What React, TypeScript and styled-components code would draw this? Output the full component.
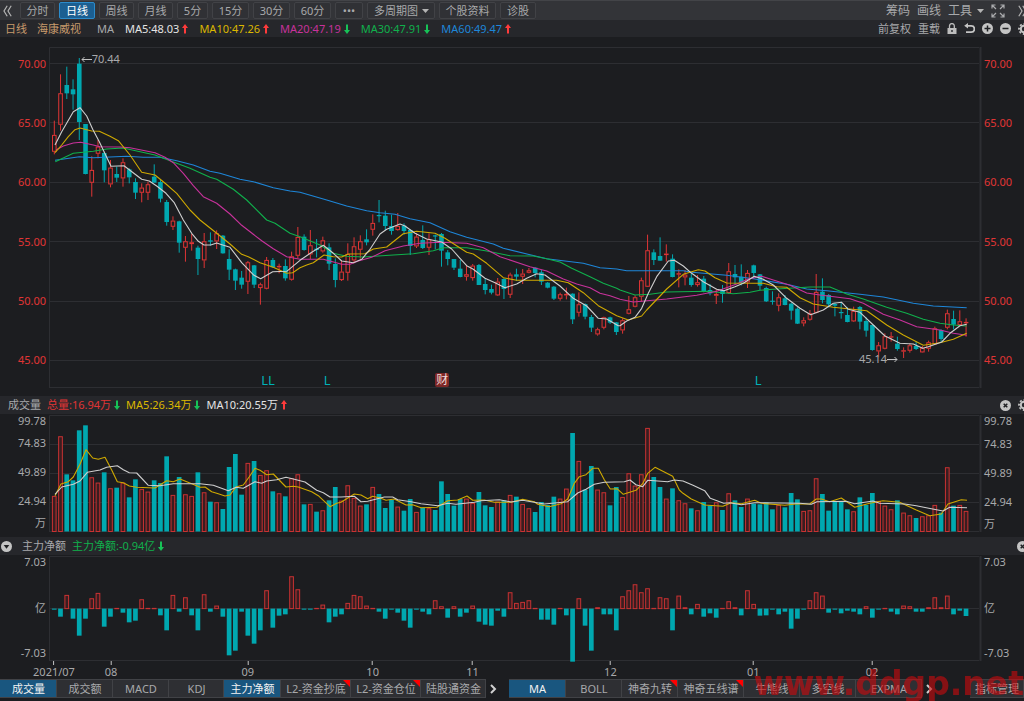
import React from "react";
import styled, { createGlobalStyle, css } from "styled-components";

const c = {
  page: "#1c1d20",
  header: "#26272b",
  toolbar: "#333438",
  line: "#2d2e32",
  border: "#414246",
  text: "#a8a9ab",
  bright: "#e4e4e4",
  red: "#e03535",
  up: "#c83232",
  teal: "#00a8b0",
  yellow: "#cfa900",
  gold: "#dcb800",
  magenta: "#c8329b",
  green: "#10b04c",
  blue: "#1e86d8",
  white: "#cfcfcf",
  active: "#19567f",
};

const GlobalStyle = createGlobalStyle`
  * { box-sizing: border-box; }
  body {
    margin: 0;
    background: ${c.page};
    color: ${c.text};
    font: 11px/16px "Noto Sans", "Noto Sans CJK SC", sans-serif;
    overflow: hidden;
  }
  button, select { font: inherit; color: inherit; margin: 0; }
`;

/* ---------- market data ---------- */

const FIRST_X = 54;
const STEP = 6.245;
const barX = (i: number) => FIRST_X + STEP * i;

type Candle = { up: boolean; high: number; low: number; top: number; bottom: number };

/* Each section lists kind + high,low,top,bottom in thirds of a unit below its base. */
const readCandles = (base: number, rows: string): Candle[] =>
  rows.trim().split(/\s+/).map((row) => {
    const [high, low, top, bottom] = row.slice(1).split(",").map((v) => base + Number(v) / 3);
    return { up: row[0] === "r", high, low, top, bottom };
  });

const candles: Candle[] = [
  ...readCandles(40, `
    r242,343,285,335 r103,272,160,254 c80,177,135,160 c118,209,148,163 c54,300,71,246
    c252,403,252,402 r349,470,390,428 r300,355,320,341 c335,427,339,391 r360,442,383,433
    c380,426,402,413 r355,440,367,415 c385,430,388,412 c415,477,426,458 r430,487,443,458
    r425,480,433,458 c373,427,410,428 c417,487,426,476 c480,557,486,546 r529,570,542,560
    c542,638,544,608 r588,665,604,623 r582,632,607,612 c617,705,623,657 r579,684,604,661
    c577,617,601,605 r571,627,580,604 c585,641,587,640 c628,720,657,689 c686,750,688,722
    c693,746,713,734 r663,762,667,725 c675,744,676,734 r728,794,733,744 r651,748,660,746
    c654,684,660,682 r671,700,678,681 c658,722,678,715 r635,722,649,719 r561,655,591,647
    c583,632,590,630 r570,657,616,643 c597,652,626,630 r590,638,601,634 c610,690,622,671`),
  ...readCandles(180, `
    c235,322,252,300 r243,303,275,300 r190,302,222,278 r172,250,199,241 r166,236,184,209
    c148,196,178,187 r103,167,129,149 c60,127,105,108 c92,150,107,138 c104,164,138,153
    r99,152,138,150 c130,164,137,153 c148,225,150,198 r160,204,170,199 c136,207,180,204
    r160,225,178,203 c164,208,166,169 c159,260,162,212 c210,256,217,237 c237,270,237,263
    c240,292,266,291 r255,302,283,290 r252,302,257,294 c252,315,255,315 c295,343,312,330
    c314,343,327,338 r294,348,305,346 c295,357,297,327 r278,354,284,344 c266,303,283,290
    r267,312,281,290 r264,280,271,278 c262,292,263,279 c270,315,277,305 c306,325,308,323
    c318,360,320,356 r338,362,343,356 r323,358,342,346 c340,432,341,418 r337,410,373,398
    c370,418,372,410 c405,456,411,443 r443,467,448,463 r410,448,412,443 c410,432,412,428
    c426,465,427,456`),
  ...readCandles(220, `
    r295,341,301,331 r228,283,268,281 r226,262,232,260 r173,245,181,230 r44,201,91,200
    c88,135,97,120 c52,122,108,122 r73,125,101,105 c103,172,116,171 r148,202,160,163
    r150,196,164,172 c160,200,173,195 r165,200,187,195 c168,217,176,213 c192,226,210,220
    r208,252,222,227 c195,248,210,222 r129,222,154,219 c135,194,162,172 c133,196,170,188
    r150,204,159,187 c134,175,136,159 c162,210,163,197 c200,246,204,244 c214,254,242,245
    r220,274,232,257 c225,256,235,255 c248,299,251,272 c262,312,266,311 r292,319,301,310
    r270,302,280,299 r162,280,216,278 c175,250,215,240 c222,262,225,253 c248,289,252,257
    c245,296,276,279 c262,307,285,306 r260,306,273,304 c258,328,261,305 c292,350,303,332
    c314,392,315,390 r366,412,376,394 r340,388,349,386 r336,365,349,352 c350,392,371,387
    r382,414,391,394 r370,398,376,392 c365,390,378,387 r378,398,384,397 r362,395,367,386
    r320,374,325,373 c328,365,330,357 r269,328,280,323 c272,328,297,314 r271,318,304,315
    r295,350,306,309`),
];

type Bar = { up: boolean; y: number };
const readBars = (base: number, rows: string): Bar[] =>
  rows.trim().split(/\s+/).map((row) => ({ up: row[0] === "r", y: base + Number(row.slice(1)) / 3 }));

const volumes = readBars(395, `
  r303 r124 c238 c256 c106 c91 r247 r263 c232 r280 c278 r263 c307 c253 r282 r290 c256 c264 c184 r300
  c246 r298 r303 c232 r292 c320 r322 c342 c216 c177 c299 r204 c198 r240 r226 c289 r295 c304 r250 r238
  c328 r327 c350 r346 c316 c276 r317 r271 r309 r332 c328 r276 c297 c339 c315 r335 c347 c312 r351 c338
  r340 c345 c259 c297 c332 c312 r311 r324 c291 c331 c336 r320 c316 r300 c305 r327 r340 c351 c321 c330
  c305 r311 r281 c114 r198 c284 c213 r284 r292 c331 c276 r306 r235 r272 r238 r99 c246 c276 r311 c280
  r316 r325 c340 r346 c321 c332 r322 c345 r295 c316 c336 r311 c326 c328 c322 c343 r330 c337 c294 c313
  r348 r346 r250 c297 c347 c321 c320 c343 r349 c307 c330 c294 r318 r332 r343 c316 r353 r361 c369 r364
  r361 r330 c353 r217 c332 r330 r348`);

const flows = readBars(535, `
  c224 c245 r180 c251 c302 c251 r190 r174 c275 c245 r219 c233 c262 c257 r193 r219 r219 c241 c286 r180
  c230 r187 c241 c286 r178 c230 r212 c245 c361 c347 c230 c302 c326 c286 r166 c278 c242 c238 r124 r163
  c224 c224 r219 r209 c262 c245 c238 r204 r180 r184 r212 r219 c230 c251 c224 c233 c257 c278 c224 c230
  c238 r196 r214 c248 r214 c245 c233 r212 c260 c269 c272 c227 c245 r172 r204 r201 r196 r219 c254 c254
  c269 r219 c241 c380 r190 c272 c347 r217 c238 c238 c286 r184 r166 r148 r172 r160 r219 r187 r190 c286
  r182 r217 c238 r207 c245 c235 c248 r219 r199 r217 c241 r166 r207 c242 c241 c224 c238 c230 c281 c251
  c224 r196 r172 r182 c233 c224 c235 c227 c230 c238 r214 c248 c224 r219 c230 c238 r212 r214 c230 c230
  r217 r187 r217 r182 c238 c227 c243`);

type Section = [number, number, string];
const curve = (...sections: Section[]) =>
  sections
    .map(([ox, oy, pts]) =>
      pts.split(" ").map((p) => {
        const [x, y] = p.split(",").map(Number);
        return `${(ox + x / 3).toFixed(1)},${(oy + y / 3).toFixed(1)}`;
      }).join(" "))
    .join(" ");

const priceAverages = [
  { color: c.blue, points: curve(
    [40, 40, "45,361 118,350 160,353 260,349 310,352 360,352 410,362 460,375 510,394 540,400 600,418 640,425 700,443 750,453"],
    [300, 180, "0,37 80,60 140,78 200,92 240,98 285,103 330,116 390,128 450,155 500,172 580,192 610,205 690,224 740,236 850,250 900,263 950,267"],
    [620, 220, "20,152 190,152 215,157 320,166 400,176 500,193 560,207 620,212 720,223 790,231 880,250 940,258 1040,263"]) },
  { color: c.green, points: curve(
    [40, 40, "46,365 100,340 160,334 200,327 250,324 290,333 345,345 400,366 450,385 510,412 530,418 580,448 620,480 680,540 705,550 750,580"],
    [300, 180, "0,170 60,195 100,220 140,229 190,231 280,225 340,221 400,212 430,203 500,203 560,213 630,227 700,228 740,236 780,246 815,265 870,290 910,310 950,325"],
    [620, 220, "0,210 45,225 90,223 140,216 260,214 340,221 390,217 420,211 470,207 570,201 630,201 680,222 730,237 800,262 860,280 910,298 960,310 1000,315 1040,318"]) },
  { color: c.magenta, points: curve(
    [40, 40, "48,330 70,318 100,309 122,307 160,315 180,320 240,321 270,323 300,329 345,338 375,352 400,368 430,400 460,437 490,470 530,490 570,522 605,556 640,583 665,602 700,626 740,650"],
    [300, 180, "0,238 70,238 125,253 150,253 175,243 215,232 255,212 310,198 360,190 420,187 500,190 550,203 600,230 690,260 740,273 790,297 830,312 870,323 900,340 930,347"],
    [620, 220, "0,238 40,246 140,237 230,226 290,214 350,192 385,177 425,169 460,180 510,196 560,219 600,225 690,236 730,250 790,283 840,300 890,320 960,330 1000,340 1040,346"]) },
  { color: c.yellow, points: curve(
    [40, 40, "45,338 65,315 85,290 105,269 120,264 155,273 178,274 210,289 235,302 270,345 305,397 345,405 378,432 410,460 450,510 480,540 530,580 570,612 605,643 625,650 660,668 700,682 740,700 758,698"],
    [300, 180, "0,263 20,255 40,248 72,225 100,230 125,231 145,222 195,221 220,207 260,201 310,161 350,154 405,160 435,175 500,217 520,222 560,250 610,293 650,301 715,301 770,301 805,308 850,338 895,377 950,407"],
    [620, 220, "25,300 65,288 80,270 140,207 190,163 235,149 255,153 285,173 320,189 400,190 430,190 470,200 500,202 540,233 580,252 640,262 740,272 800,315 850,345 910,376 960,368 1000,358 1040,340"]) },
  { color: c.white, points: curve(
    [40, 40, "45,315 65,275 100,215 120,203 140,228 158,268 178,305 213,379 252,377 305,418 328,423 350,438 378,460 402,487 430,540 455,580 475,604 492,615 512,615 530,609 548,615 570,622 605,668 642,706 662,716 698,695 740,694"],
    [300, 180, "0,241 35,217 70,196 100,220 125,243 160,248 185,238 210,208 240,162 260,148 300,132 315,138 345,160 380,177 425,186 455,207 480,235 500,257 520,268 555,295 585,308 615,323 650,312 680,295 710,281 735,285 780,318 820,355 860,378 895,415 920,417 955,437"],
    [620, 220, "0,317 20,303 45,292 65,265 85,220 110,170 145,123 163,121 190,138 215,160 250,185 290,208 312,212 345,200 370,190 403,169 430,178 460,195 500,235 540,265 572,284 610,270 640,250 665,247 685,268 720,277 760,315 795,348 840,370 880,372 908,385 925,380 965,366 990,340 1020,317 1040,313"]) },
];

const volumeAverages = [
  { color: c.yellow, points: curve(
    [0, 395, "165,302 183,267 205,260 220,246 240,208 258,164 278,189 295,193 315,187 335,225 352,260 370,263 388,273 410,277 465,279 500,257 520,260 540,252 575,266 600,277 615,276 635,290 655,296 675,303 690,300 708,276 730,270 748,245 765,220 780,226 800,239 820,237 858,276 880,274 895,276 935,290 955,302 990,335 1010,325"],
    [341, 395, "0,322 40,297 60,300 80,311 95,304 120,310 135,316 160,312 195,330 215,329 240,338 288,337 320,317 350,315 378,303 395,316 430,315 460,322 510,322 545,313 580,320 590,328 625,335 660,326 680,312 700,265 715,245 735,239 755,220 772,220 790,254 808,282 828,281 847,298 885,286 905,266 920,235 942,217 995,244 1015,285"],
    [683, 395, "0,295 25,312 65,330 120,334 145,323 175,326 215,316 235,325 305,331 345,326 380,327 400,312 415,312 440,320 475,309 515,337 560,325 600,317 650,322 700,345 740,362 775,357 795,327 835,314 852,316"]) },
  { color: c.white, points: curve(
    [0, 395, "165,298 185,276 220,268 240,258 262,232 300,225 320,217 352,212 370,224 388,233 410,234 445,271 480,272 520,266 600,266 640,271 685,287 708,277 730,280 765,260 785,265 800,258 830,254 858,247 880,252 915,261 950,286 970,293 990,306"],
    [341, 395, "0,306 40,304 60,320 80,319 130,306 155,306 170,314 210,320 240,326 290,332 320,325 345,328 400,322 420,317 475,314 510,321 545,316 610,327 680,320 710,294 735,283 760,268 790,262 850,260 867,255 885,269 905,275 920,256 980,260 1000,255"],
    [683, 395, "0,258 30,271 65,287 82,310 122,325 140,323 175,329 215,323 350,325 385,328 402,320 490,319 515,326 570,318 590,325 665,327 700,332 745,341 780,348 800,337 852,338"]) },
];

/* ---------- layout ---------- */

const Screen = styled.main`
  display: flex;
  flex-direction: column;
  min-height: 100vh;
  overflow: hidden;
`;

const Bar = styled.div`
  display: flex;
  align-items: center;
  justify-content: space-between;
  overflow: hidden;
  white-space: nowrap;
`;

const Toolbar = styled(Bar)`
  height: 20px;
  padding-left: 3px;
  background: ${c.toolbar};
  border-top: 1px solid #434448;
`;

const InfoBar = styled(Bar)`
  height: 17px;
  padding-left: 5px;
  background: ${c.header};
`;

const PanelHeader = styled(Bar)<{ $indent: number }>`
  height: 18px;
  padding-left: ${(p) => p.$indent}px;
  background: ${c.header};
`;

const Group = styled.div<{ $gap: number; $bleed?: number }>`
  display: flex;
  align-items: center;
  gap: ${(p) => p.$gap}px;
  margin-right: -${(p) => p.$bleed ?? 0}px;
`;

const toolFace = css`
  height: 17px;
  padding: 0;
  border: 1px solid ${c.border};
  border-radius: 2px;
  background: #303135;
  line-height: 15px;
`;

const ToolButton = styled.button<{ $width: number; $active?: boolean }>`
  ${toolFace}
  width: ${(p) => p.$width}px;
  ${(p) => p.$active && css`
    background: #1b5f92;
    border-color: #2b8bcb;
    color: #ffffff;
  `}
`;

const SelectWrap = styled.label`
  display: flex;
  position: relative;
`;

const ToolSelect = styled.select`
  ${toolFace}
  width: 68px;
  padding-left: 6px;
  appearance: none;
`;

const SelectArrow = styled.span`
  position: absolute;
  top: 7px;
  right: 6px;
  display: flex;
  pointer-events: none;
`;

const PlainButton = styled.button<{ $size?: number }>`
  display: flex;
  align-items: center;
  gap: 5px;
  padding: 0;
  border: 0;
  background: none;
  font-size: ${(p) => p.$size ?? 11}px;
  line-height: 16px;
`;

const Reading = styled.span<{ $color: string }>`
  display: inline-flex;
  align-items: center;
  gap: 3px;
  color: ${(p) => p.$color};
`;

const Instrument = styled.span`
  display: flex;
  gap: 10px;
  margin-right: 5px;
  color: #c79a6b;
`;

const Plot = styled.section<{ $height: number; $top: number; $bottom: number }>`
  display: grid;
  grid-template-columns: 49px minmax(0, 1fr) 44px;
  grid-template-rows: minmax(0, 1fr);
  flex: ${(p) => p.$height} 0 ${(p) => p.$height}px;
  margin: ${(p) => p.$top}px 0 ${(p) => p.$bottom}px;
`;

const Canvas = styled.div`
  position: relative;
  min-height: 0;

  svg.chart {
    position: absolute;
    inset: 0;
    display: block;
    width: 100%;
    height: 100%;
    overflow: visible;
  }
`;

const Axis = styled.div<{ $side: "left" | "right"; $rows: string }>`
  display: grid;
  grid-template-rows: ${(p) => p.$rows};
  align-items: center;
  line-height: 12px;
  text-align: ${(p) => (p.$side === "left" ? "right" : "left")};
  padding: ${(p) => (p.$side === "left" ? "0 3px 0 0" : "0 0 0 4px")};

  span { min-height: 0; }
`;

const PriceAxis = styled.div<{ $side: "left" | "right" }>`
  display: flex;
  flex-direction: column;
  justify-content: space-between;
  color: ${c.red};
  text-align: ${(p) => (p.$side === "left" ? "right" : "left")};
  padding: ${(p) => (p.$side === "left" ? "9px 3px 20px 0" : "9px 0 20px 4px")};
`;

const Note = styled.span<{ $x: number; $y: number }>`
  position: absolute;
  left: ${(p) => p.$x}%;
  top: ${(p) => p.$y}%;
  display: flex;
  align-items: center;
  line-height: 14px;
`;

const Marker = styled(Note)`
  color: #00b0b8;
  font-size: 13px;
`;

const Badge = styled(Note)`
  padding: 0 1px;
  border-radius: 2px;
  background: #7d2727;
  color: #f0d8d8;
  font-size: 12px;
`;

const Months = styled.div`
  display: grid;
  grid-template-columns: 4fr 57fr 137fr 125fr 100fr 138fr 143fr 119fr 108fr;
  height: 18px;
  margin: 0 44px 0 50px;
`;

const Month = styled.span<{ $col: number }>`
  grid-column: ${(p) => p.$col};
  display: flex;
  flex-direction: column;
  align-items: center;
  justify-self: start;
  transform: translateX(-50%);
  line-height: 14px;

  &::before {
    content: "";
    width: 1px;
    height: 4px;
    background: #c4c4c4;
  }
`;

const TabBar = styled.nav`
  display: flex;
  align-items: stretch;
  height: 19px;
  margin-bottom: 3px;
  overflow: hidden;
  position: relative;
`;

const Tab = styled.button<{ $width: number; $active?: boolean }>`
  position: relative;
  flex: none;
  width: ${(p) => p.$width}px;
  padding: 1px 0 0 1px;
  border: 1px solid ${c.border};
  border-left-width: 0;
  background: ${(p) => (p.$active ? c.active : "#2e2f33")};
  color: ${(p) => (p.$active ? "#f2f2f2" : "inherit")};
  line-height: 16px;
  white-space: nowrap;
`;

const HotCorner = styled.i`
  position: absolute;
  top: 0;
  right: 0;
  border-top: 7px solid #ff0000;
  border-left: 7px solid transparent;
`;

const MoreButton = styled.button<{ $width: number }>`
  flex: none;
  display: flex;
  align-items: center;
  width: ${(p) => p.$width}px;
  padding: 0 0 0 4px;
  border: 0;
  background: none;
`;

const Spacer = styled.div`
  flex: 1;
`;

const Watermark = styled.div`
  position: fixed;
  right: 0;
  bottom: 0;
  color: rgba(205, 10, 14, 0.6);
  font: bold 33px/40px "DejaVu Sans", sans-serif;
  margin-bottom: -3px;
  pointer-events: none;
`;

/* ---------- drawings ---------- */

const Trend = ({ up }: { up: boolean }) => (
  <svg width="6" height="10" viewBox="0 0 6 10" fill={up ? "#ff3b3b" : "#17c257"} aria-hidden="true">
    {up ? <path d="M3 0 6 4H4V9.500H2V4H0Z" /> : <path d="M3 10 6 6H4V.5H2V6H0Z" />}
  </svg>
);

const Caret = () => (
  <svg width="7" height="4" viewBox="0 0 7 4" aria-hidden="true"><path d="M0 0h7L3.500 4Z" fill="#b4b4b4" /></svg>
);

const DoubleChevron = ({ flip }: { flip?: boolean }) => (
  <svg width="9" height="12" viewBox="0 0 9 12" fill="none" stroke="#b4b4b4" strokeWidth="1.200" aria-hidden="true">
    {flip ? <path d="M.8.8 4 6 .8 11.200M4.800.8 8 6 4.800 11.200" /> : <path d="M4.200.8 1 6l3.200 5.200M8.200.8 5 6l3.200 5.200" />}
  </svg>
);

const Chevron = () => (
  <svg width="7" height="10" viewBox="0 0 7 10" fill="none" stroke="#d0d0d0" strokeWidth="2" aria-hidden="true">
    <path d="M1 1l4 4-4 4" />
  </svg>
);

const ExpandIcon = () => (
  <svg width="14" height="14" viewBox="0 0 14 14" fill="none" stroke="#aaabad" strokeWidth="1.200" aria-hidden="true">
    <path d="M1 4.500V1h3.500M1 1l4 4M9.500 1H13v3.500M13 1 9 5M1 9.500V13h3.500M1 13l4-4M13 9.500V13H9.500M13 13 9 9" />
  </svg>
);

const LockIcon = () => (
  <svg width="10" height="11" viewBox="0 0 10 11" aria-hidden="true">
    <path d="M2.500 5V3a2.400 2.400 0 0 1 4.800 0v2" fill="none" stroke="#bdbdbd" strokeWidth="1.300" />
    <path fillRule="evenodd" d="M.5 5h9v6h-9ZM4.300 7v2h1.400V7Z" fill="#bdbdbd" />
  </svg>
);

const UndoIcon = () => (
  <svg width="11" height="11" viewBox="0 0 11 11" aria-hidden="true">
    <path d="M3 2.800h4.200a3.100 3.100 0 0 1 0 6.400H2" fill="none" stroke="#c4c4c4" strokeWidth="1.700" />
    <path d="M.2 2.800 4 0v5.600Z" fill="#c4c4c4" />
  </svg>
);

const discMarks = {
  plus: "M5.500 2.500v6M2.500 5.500h6",
  minus: "M2.500 5.500h6",
  close: "M3.700 3.700l3.600 3.600M7.300 3.700 3.700 7.300",
};

const Disc = ({ mark }: { mark: keyof typeof discMarks }) => (
  <svg width="11" height="11" viewBox="0 0 11 11" aria-hidden="true">
    <circle cx="5.500" cy="5.500" r="5.500" fill="#c4c4c4" />
    <path d={discMarks[mark]} stroke="#1f2023" strokeWidth="1.500" />
  </svg>
);

const CollapseIcon = () => (
  <svg width="11" height="11" viewBox="0 0 11 11" aria-hidden="true">
    <circle cx="5.500" cy="5.500" r="5.500" fill="#c4c4c4" />
    <path d="M2.700 4h5.600L5.500 7.800Z" fill="#1f2023" />
  </svg>
);

const GearIcon = () => (
  <svg width="12" height="12" viewBox="0 0 12 12" fill="none" stroke="#c4c4c4" aria-hidden="true">
    <circle cx="6" cy="6" r="3.200" strokeWidth="2" />
    <circle cx="6" cy="6" r="5" strokeWidth="1.800" strokeDasharray="2 1.927" strokeDashoffset="1" />
  </svg>
);

const LongArrow = ({ right }: { right?: boolean }) => (
  <svg width="11" height="7" viewBox="0 0 11 7" fill="none" stroke="#c0c0c0" aria-hidden="true">
    {right ? <path d="M0 3.500h10M7.500 1 10 3.500 7.500 6" /> : <path d="M11 3.500H1M3.500 1 1 3.500 3.500 6" />}
  </svg>
);

const Chart = ({ top, height, grid, children }: {
  top: number; height: number; grid: number[]; children: React.ReactNode;
}) => (
  <svg className="chart" viewBox={`49 ${top} 931 ${height}`} preserveAspectRatio="none" aria-hidden="true">
    <g stroke={c.line} fill="none">
      <path d={`M49.500 ${top + height}V${top + 0.5}H979`} />
      <path d={`M49 ${top + height - 0.5}H979`} />
      <path d={`M980.500 ${top}V${top + height}`} strokeWidth="2" />
      {grid.map((y) => <path key={y} d={`M49 ${y}H979`} />)}
    </g>
    {children}
  </svg>
);

const Averages = ({ lines }: { lines: { color: string; points: string }[] }) => (
  <g fill="none" strokeWidth="1.100" strokeLinejoin="round">
    {lines.map((l) => <polyline key={l.color} points={l.points} stroke={l.color} />)}
  </g>
);

const Candles = () => (
  <g>
    {candles.map((k, i) => {
      const x = barX(i) + 0.3;
      const h = Math.max(k.bottom - k.top, 1.2);
      return k.up ? (
        <g key={i} stroke={c.red} fill="none">
          <path d={`M${x} ${k.high}V${k.top}M${x} ${k.top + h}V${k.low}`} />
          <rect x={x - 1.8} y={k.top + 0.4} width="3.600" height={Math.max(h - 0.8, 0.4)} />
        </g>
      ) : (
        <g key={i} fill={c.teal}>
          <rect x={x - 0.5} y={k.high} width="1" height={k.low - k.high} />
          <rect x={x - 2.3} y={k.top} width="4.600" height={h} />
        </g>
      );
    })}
  </g>
);

const Columns = ({ bars, base }: { bars: Bar[]; base: number }) => (
  <g>
    {bars.map((b, i) => {
      const x = barX(i) + 0.2;
      const y = Math.min(b.y, base);
      const h = Math.abs(b.y - base);
      return b.up ? (
        <rect key={i} x={x - 1.8} y={y + 0.4} width="3.700" height={Math.max(h - 0.4, 0.3)} fill="#3a1d20" stroke={c.up} />
      ) : (
        <rect key={i} x={x - 2.3} y={y} width="4.700" height={h} fill={c.teal} />
      );
    })}
  </g>
);

/* ---------- content ---------- */

const periods: [string, number][] = [
  ["分时", 35], ["日线", 36], ["周线", 35], ["月线", 35], ["5分", 31],
  ["15分", 37], ["30分", 37], ["60分", 37], ["•••", 28],
];

const averages: [string, string, boolean][] = [
  ["MA5:48.03", c.bright, true],
  ["MA10:47.26", c.gold, true],
  ["MA20:47.19", c.magenta, false],
  ["MA30:47.91", c.green, false],
  ["MA60:49.47", c.blue, true],
];

const prices = ["70.00", "65.00", "60.00", "55.00", "50.00", "45.00"];
const volumeTicks = ["99.78", "74.83", "49.89", "24.94", "万"];
const flowTicks = ["7.03", "亿", "-7.03"];
const months = ["2021/07", "08", "09", "10", "11", "12", "01", "02"];

type TabItem = { label: string; width: number; active?: boolean; hot?: boolean };
const panelTabs: TabItem[] = [
  { label: "成交量", width: 57, active: true },
  { label: "成交额", width: 56 },
  { label: "MACD", width: 56 },
  { label: "KDJ", width: 55 },
  { label: "主力净额", width: 57, active: true },
  { label: "L2-资金抄底", width: 70, hot: true },
  { label: "L2-资金仓位", width: 70, hot: true },
  { label: "陆股通资金", width: 65 },
];
const overlayTabs: TabItem[] = [
  { label: "MA", width: 57, active: true },
  { label: "BOLL", width: 56 },
  { label: "神奇九转", width: 56, hot: true },
  { label: "神奇五线谱", width: 66, hot: true },
  { label: "牛熊线", width: 56 },
  { label: "多空线", width: 56 },
  { label: "EXPMA", width: 66 },
];

const Tabs = ({ items }: { items: TabItem[] }) => (
  <>
    {items.map((t) => (
      <Tab key={t.label} $width={t.width} $active={t.active}>
        {t.label}
        {t.hot && <HotCorner />}
      </Tab>
    ))}
  </>
);

const Labels = ({ items }: { items: string[] }) => (
  <>{items.map((t) => <span key={t}>{t}</span>)}</>
);

export default function App() {
  const flowRows = "12fr 79fr 12fr 2fr";
  return (
    <Screen>
      <GlobalStyle />
      <Toolbar>
        <Group $gap={4}>
          <PlainButton aria-label="收起"><DoubleChevron /></PlainButton>
          <Spacer />
          {periods.map(([label, width]) => (
            <ToolButton key={label} $width={width} $active={label === "日线"}>{label}</ToolButton>
          ))}
          <SelectWrap>
            <ToolSelect aria-label="多周期图"><option>多周期图</option></ToolSelect>
            <SelectArrow><Caret /></SelectArrow>
          </SelectWrap>
          <ToolButton $width={57}>个股资料</ToolButton>
          <ToolButton $width={36}>诊股</ToolButton>
        </Group>
        <Group $gap={7} $bleed={3}>
          <PlainButton $size={12}>筹码</PlainButton>
          <PlainButton $size={12}>画线</PlainButton>
          <PlainButton $size={12} aria-haspopup="menu">工具<Caret /></PlainButton>
          <Group $gap={13}>
            <PlainButton aria-label="全屏"><ExpandIcon /></PlainButton>
            <PlainButton aria-label="展开"><DoubleChevron flip /></PlainButton>
          </Group>
        </Group>
      </Toolbar>

      <InfoBar>
        <Group $gap={11}>
          <Instrument><span>日线</span><span>海康威视</span></Instrument>
          <span>MA</span>
          {averages.map(([label, color, up]) => (
            <Reading key={label} $color={color}>{label}<Trend up={up} /></Reading>
          ))}
        </Group>
        <Group $gap={7} $bleed={6}>
          <PlainButton>前复权</PlainButton>
          <PlainButton>重载</PlainButton>
          <PlainButton aria-label="锁定"><LockIcon /></PlainButton>
          <PlainButton aria-label="撤销"><UndoIcon /></PlainButton>
          <PlainButton aria-label="放大"><Disc mark="plus" /></PlainButton>
          <PlainButton aria-label="缩小"><Disc mark="minus" /></PlainButton>
          <PlainButton aria-label="设置"><GearIcon /></PlainButton>
        </Group>
      </InfoBar>

      <Plot $height={341} $top={10} $bottom={8}>
        <PriceAxis $side="left"><Labels items={prices} /></PriceAxis>
        <Canvas>
          <Chart top={47} height={341} grid={[63.5, 122.5, 182.5, 241.5, 301.5, 360.5]}>
            <Candles />
            <Averages lines={priceAverages} />
          </Chart>
          <Note $x={3.4} $y={1.5}><LongArrow />70.44</Note>
          <Note $x={87} $y={89.5}>45.14<LongArrow right /></Note>
          <Marker $x={22.8} $y={95.6}>LL</Marker>
          <Marker $x={29.5} $y={95.6}>L</Marker>
          <Marker $x={75.8} $y={95.6}>L</Marker>
          <Badge $x={41.5} $y={95.6}>财</Badge>
        </Canvas>
        <PriceAxis $side="right"><Labels items={prices} /></PriceAxis>
      </Plot>

      <PanelHeader $indent={8}>
        <Group $gap={6}>
          <span>成交量</span>
          <Reading $color={c.red}>总量:16.94万<Trend up={false} /></Reading>
          <Reading $color={c.gold}>MA5:26.34万<Trend up={false} /></Reading>
          <Reading $color={c.bright}>MA10:20.55万<Trend up /></Reading>
        </Group>
        <Group $gap={7} $bleed={6}>
          <PlainButton aria-label="关闭"><Disc mark="close" /></PlainButton>
          <PlainButton aria-label="设置"><GearIcon /></PlainButton>
        </Group>
      </PanelHeader>
      <Plot $height={117} $top={1} $bottom={5}>
        <Axis $side="left" $rows="12fr 32fr 26fr 32fr 12fr 3fr"><Labels items={volumeTicks} /></Axis>
        <Canvas>
          <Chart top={415} height={117} grid={[444.5, 473.5, 502.5]}>
            <Columns bars={volumes} base={531.5} />
            <Averages lines={volumeAverages} />
          </Chart>
        </Canvas>
        <Axis $side="right" $rows="12fr 34fr 24fr 33fr 12fr 2fr"><Labels items={volumeTicks} /></Axis>
      </Plot>

      <PanelHeader $indent={1}>
        <Group $gap={6}>
          <Group $gap={10}>
            <PlainButton aria-label="折叠"><CollapseIcon /></PlainButton>
            <span>主力净额</span>
          </Group>
          <Reading $color={c.green}>主力净额:-0.94亿<Trend up={false} /></Reading>
        </Group>
        <Group $gap={7} $bleed={4}>
          <PlainButton aria-label="关闭"><Disc mark="close" /></PlainButton>
        </Group>
      </PanelHeader>
      <Plot $height={105} $top={1} $bottom={0}>
        <Axis $side="left" $rows={flowRows}><Labels items={flowTicks} /></Axis>
        <Canvas>
          <Chart top={556} height={105} grid={[608.5]}>
            <Columns bars={flows} base={608.6} />
          </Chart>
        </Canvas>
        <Axis $side="right" $rows={flowRows}><Labels items={flowTicks} /></Axis>
      </Plot>
      <Months>
        {months.map((m, i) => <Month key={m} $col={i + 2}>{m}</Month>)}
      </Months>

      <TabBar>
        <Tabs items={panelTabs} />
        <MoreButton $width={23} aria-label="更多副图"><Chevron /></MoreButton>
        <Tabs items={overlayTabs} />
        <MoreButton $width={15} aria-label="更多指标"><Chevron /></MoreButton>
        <Spacer />
        <Tab $width={54}>指标管理</Tab>
      </TabBar>
      <Watermark>www.ddgp.net</Watermark>
    </Screen>
  );
}
